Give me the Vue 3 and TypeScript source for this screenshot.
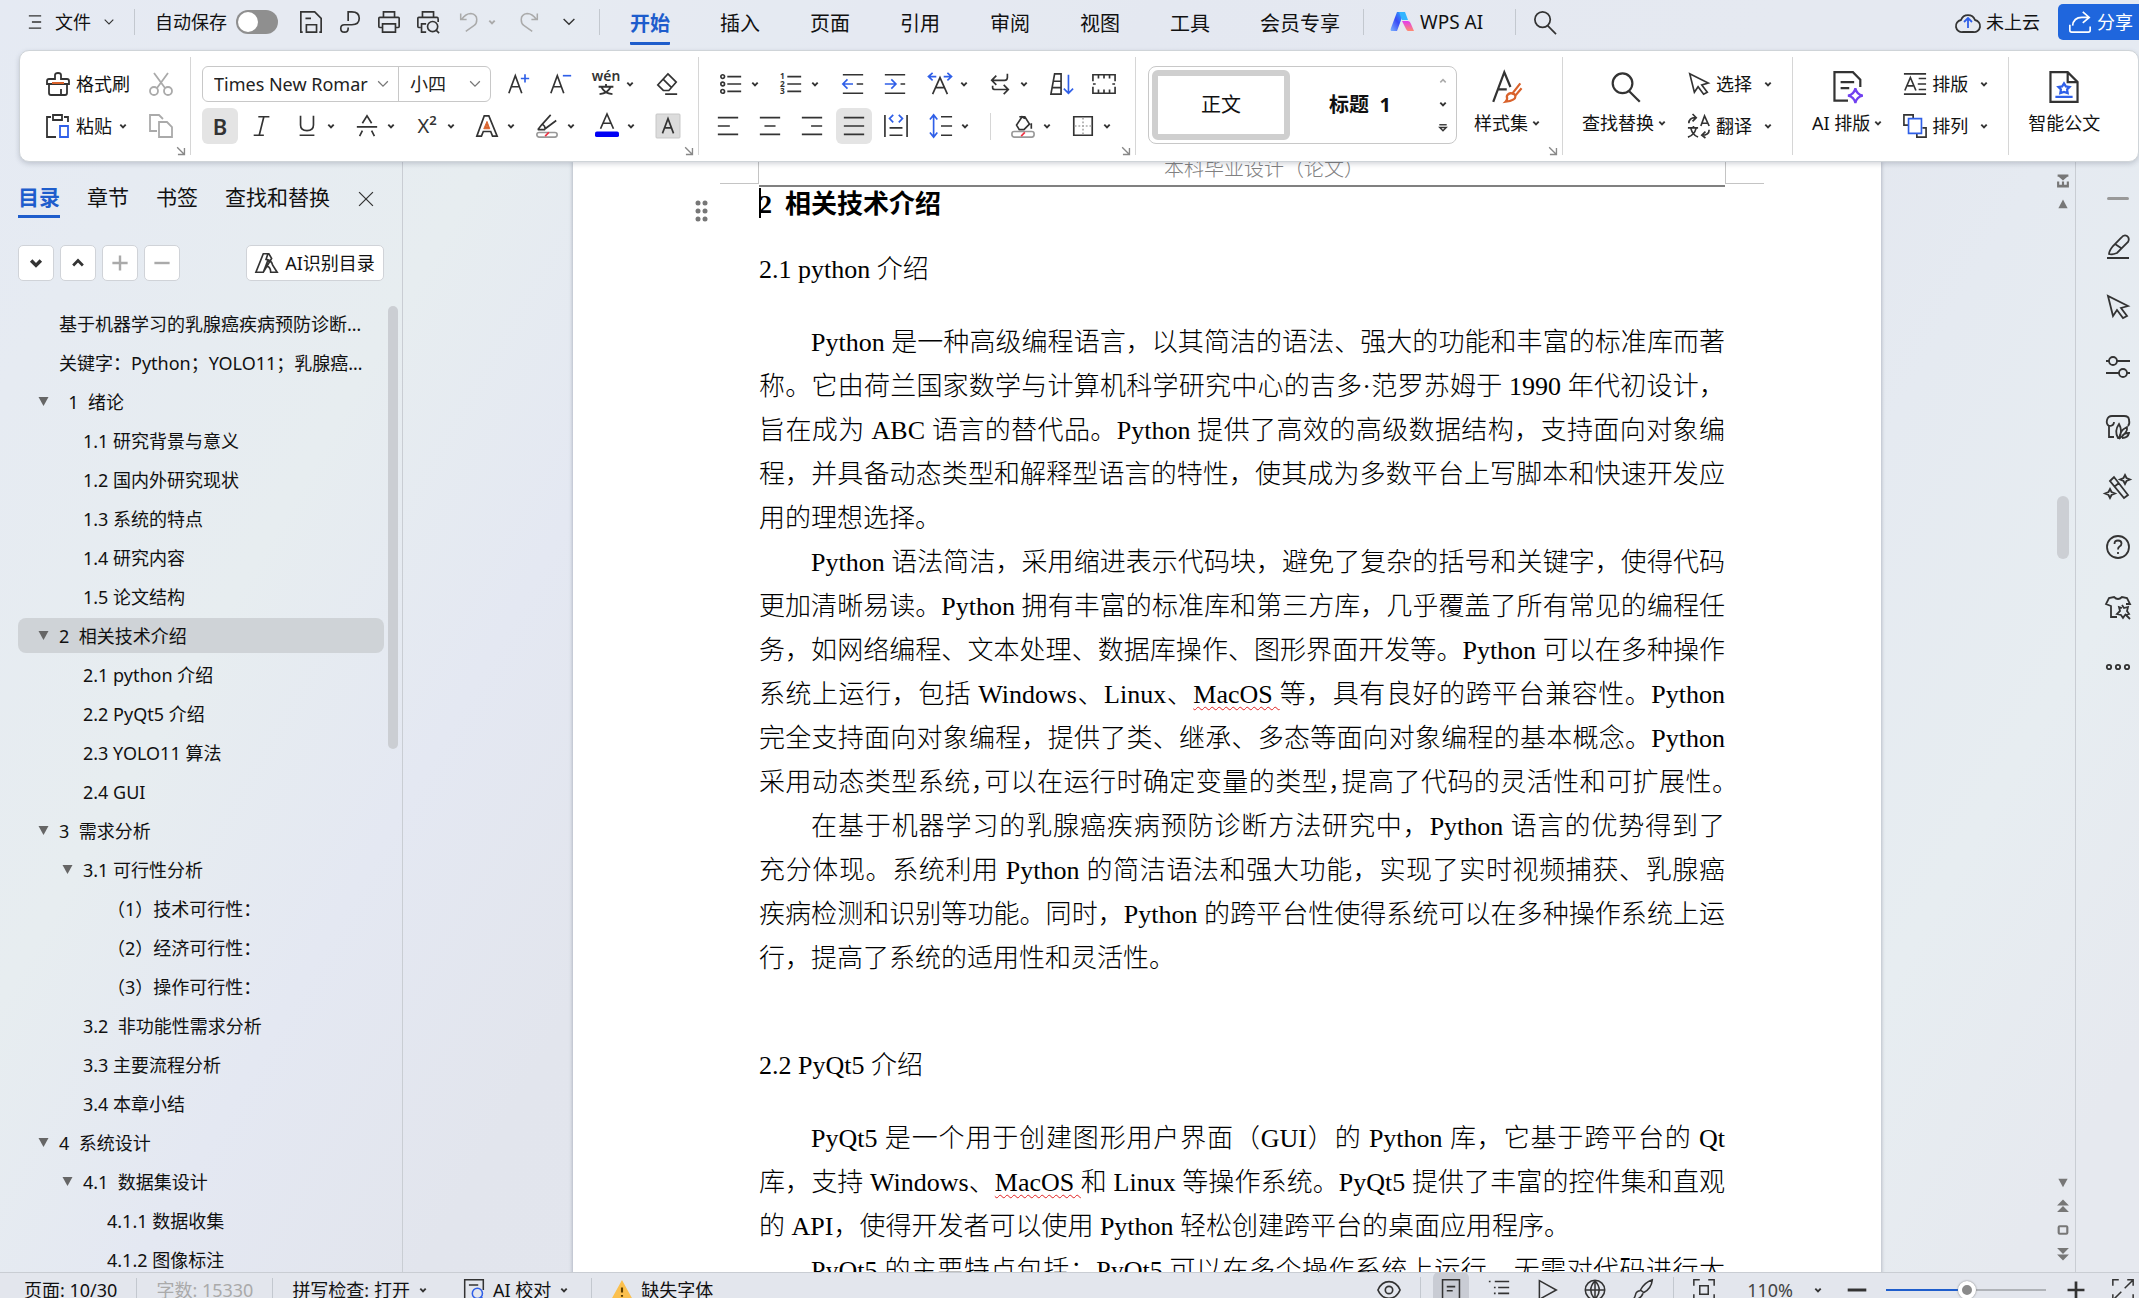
<script setup lang="ts">
import { h, ref } from 'vue'

/* Icon artwork, drawn on a 24 x 24 grid. */
const icons: Record<string, string> = {
  menu: '<path d="M4 4h16M8 12h12M4 20h16"/>',
  chev: '<path d="M5 8l7 7 7-7"/>',
  chevB: '<path d="M5 8.500l7 7 7-7" stroke-width="5"/>',
  chevUp: '<path d="M5 15.500l7-7 7 7" stroke-width="4"/>',
  save: '<path d="M3 23H1V1h15l7 7v15h-2M7 23v-8h11v8zM6 8h6"/>',
  pdf: '<path d="M10 11V1h4q8 0 8 7t-8 7H6q-4 0-4 4t4 4q4 0 4-4v-1"/>',
  print: '<path d="M6 7V1h12v6M5 18H2q-1 0-1-1V8q0-1 1-1h20q1 0 1 1v9q0 1-1 1h-3M5 14h14v9H5z"/>',
  preview: '<path d="M6 7V1h12v6M4 18H2q-1 0-1-1V8q0-1 1-1h20q1 0 1 2v3M10 14H5v9h5"/><circle cx="17" cy="17" r="5.500"/><path d="M21 21l3 3"/>',
  undo: '<path d="M1 2v7h7M2 9q5-7 11-7 7 1 7 7 0 5-3 7L7 23"/>',
  redo: '<path d="M23 2v7h-7M22 9q-5-7-11-7-7 1-7 7 0 5 3 7l10 7"/>',
  search: '<circle cx="10" cy="9" r="8"/><path d="M15 15l9 9"/>',
  cloud: '<path d="M7 22a6 6 0 0 1-2-12A7.500 7.500 0 0 1 19 10 6 6 0 0 1 17 22z"/><path stroke="#2f5fe8" d="M12 18V8M8 12l4-4 4 4"/>',
  share: '<path d="M15 1l7 6-7 6M22 7h-8Q5 7 4 16M1 15v6q0 2 2 2h18q2 0 2-2v-4"/>',
  brush: '<path d="M9 7V3q0-2 3-2t3 2v4h6q2 0 2 2v3H1V9q0-2 2-2zM3 12v9q0 2 2 2h14q2 0 2-2v-9M15 17v5"/><path stroke="#d9622b" d="M6 11h12" stroke-width="2"/>',
  cut: '<path d="M5 1l11 15M19 1L8 16"/><circle cx="5" cy="19" r="4"/><circle cx="19" cy="19" r="4"/>',
  paste: '<path d="M5 3H1v20h9M18 3h4v5M7 1h9v5H7z"/><path stroke="#2f5fe8" d="M14 12h8v11h-8z"/>',
  copy: '<path d="M8 17H1V1h9l4 4M10 8h8l5 5v10H10z"/>',
  aPlus: '<path d="M1 22L8 3l7 19M4 15h8"/><path stroke="#2f5fe8" d="M14 6h9M18.500 1.500v9"/>',
  aMinus: '<path d="M1 22L8 3l7 19M4 15h8"/><path stroke="#2f5fe8" d="M14 3h9"/>',
  wen: '<text x="12" y="9" font-size="15" font-weight="600" text-anchor="middle">wén</text><path d="M12 12v3M4 15h16M7 15q3 7 12 8M17 15q-3 7-12 8" stroke-width="2"/>',
  eraser: '<path d="M13 1l9 9-8 9H8l-6-6zM8 7l9 9M10 23h13"/>',
  italic: '<path d="M8 2h12M3 22h11M14 2L9 22"/>',
  underline: '<path d="M5 1v10q0 6 7 6t7-6V1M4 22h16"/>',
  strike: '<path d="M1 13h22M7 9l5-8 5 8M7 17l-3 6M17 17l3 6"/>',
  aOut: '<path d="M1 23L9 1h5l9 22h-5l-2-5H8l-2 5z"/><path stroke="#d9622b" fill="#d9622b" stroke-width="1" fill-rule="evenodd" d="M12 7l3 8H8.500zM12 11l-1 2h2z"/>',
  marker: '<path d="M2 16l4-5L16 0M7 10q3 2 3 5l12-9M2 16h8"/><rect x="1" y="19" width="22" height="5" rx="2.500" stroke="#999"/><path stroke="#e34" d="M10 23l4-4"/>',
  fontColor: '<path d="M5 15l7-16 7 16M8 9h8"/><rect x="-1" y="18" width="26" height="6" rx="2" fill="#0000f5" stroke="none"/>',
  aBox: '<rect x="-1" y="-1" width="26" height="26" rx="1" fill="#dcdcdc" stroke="#c4c4c4" stroke-width="1"/><path d="M6 20l6-16 6 16M8 14h8"/>',
  bullets: '<circle cx="3" cy="4" r="2"/><circle cx="3" cy="12" r="2"/><circle cx="3" cy="20" r="2"/><path d="M8 4h15M8 12h15M8 20h15"/>',
  numbers: '<g font-size="9" font-weight="700"><text x="0" y="7">1</text><text x="0" y="15">2</text><text x="0" y="23">3</text></g><path d="M8 4h15M8 12h15M8 20h15"/>',
  outdent: '<path d="M1 2h22M16 12h7M1 22h22"/><path stroke="#2f5fe8" d="M12 12H1M6 7l-5 5 5 5"/>',
  indent: '<path d="M1 2h22M18 12h5M1 22h22"/><path stroke="#2f5fe8" d="M1 12h12M8 7l5 5-5 5"/>',
  aWide: '<path d="M4 23l8-18 8 18M7 16h10"/><path stroke="#2f5fe8" d="M8 4H-.500M4 0L-.500 4 4 8M16 4h8.500M20 0l4.500 4L20 8"/>',
  wrap: '<path d="M20 1v4q0 3-3 3H3M8 3L3 8l5 5M4 14v2q0 2 3 2h14M16 13l5 5-5 5"/>',
  sort: '<path d="M0 23L4 1h7v22zM3 9h8M2 16h9"/><path stroke="#2f5fe8" d="M19 2v20M14 17l5 5 5-5"/>',
  ruler: '<path d="M0 9V2h24v7M6 2v4M12 2v4M18 2v4M0 15v7h24v-7M6 22v-4M12 22v-4M18 22v-4M0 12h3M21 12h3"/>',
  left: '<path d="M1 3h22M1 12h13M1 21h22"/>',
  center: '<path d="M1 3h22M6 12h12M1 21h22"/>',
  right: '<path d="M1 3h22M11 12h12M1 21h22"/>',
  justify: '<path d="M1 3h22M1 12h22M1 21h22"/>',
  spread: '<path d="M0 0v24M24 0v24M5 14h14M5 22h14"/><path stroke="#2f5fe8" d="M9 0L5 4l4 4M15 0l4 4-4 4"/>',
  lineGap: '<path d="M12 2h12M12 12h12M12 22h12"/><path stroke="#2f5fe8" d="M4 0v24M0 5l4-5 4 5M0 19l4 5 4-5"/>',
  paint: '<path d="M8 2h6l5 8-6 6H8l-3-5 6-9 3 2M21 9v6"/><rect x="0" y="18" width="24" height="6" rx="2.500" stroke="#999"/><path stroke="#e34" d="M10 23l4-4"/>',
  border: '<path d="M2 2h20v20H2z"/><path stroke="#aaa" stroke-dasharray="2 2" d="M12 3v18M3 12h18"/>',
  launch: '<path d="M2 2l17 17M21 4v17H4" stroke-width="3.500"/>',
  styles: '<path d="M0 24L9 0l5 12M4 14h7"/><path stroke="#d9622b" d="M22 9l-7 9M23 13l-5 6M14 17q4 0 4 3t-8 4q2-2 1-4 0-2 3-3z"/>',
  cursor: '<path d="M2 1l5 20 4-6 6 8 4-2-6-8 7-2z"/>',
  translate: '<path d="M1 9q0-6 7-6M5 -1l4 4-4 4M23 16q0 6-8 6M19 18l-4 4 4 3"/><path d="M14 12l4-11 5 11M15 9h6M0 14h11M6 12v2M3 14q2 8 8 10M9 14q-2 8-9 10" stroke-width="1.800"/>',
  aiDoc: '<path d="M12 23H1V0h15l6 6v6M6 8h11M6 13h7"/><path stroke="#7040f0" fill="#fff" d="M18 13q1 5 6 6-5 1-6 6-1-5-6-6 5-1 6-6z"/>',
  layout: '<path d="M0 1h24M0 23h24M1 19L7 5l6 14M4 14h6M16 6h8M15 12h9M16 18h8"/>',
  arrange: '<path d="M5 11H0V0h10v4M14 20v4h10V14h-4"/><path stroke="#2f5fe8" d="M5 4h14v16H5z"/>',
  official: '<path d="M1 0h14l8 8v16H1zM15 0v8h8"/><path stroke="#2f5fe8" d="M12 9l1.500 2.500 3 .500-2 2 .5 3-3-1-3 1 .5-3-2-2 3-.5zM5 20h14"/>',
  close: '<path d="M2 2l20 20M22 2L2 22"/>',
  plus: '<path d="M12 1v22M1 12h22" stroke-width="3.500"/>',
  minus: '<path d="M1 12h22" stroke-width="3.500"/>',
  tocAi: '<path d="M8 2h6l3 5-9 15H0zM13 9L8 22M13 2l-2 6q6 1 7 6l5 8h-7q0-5-4-7"/>',
  pen: '<path d="M15 3q3-4 6-2t1 6L11 18q-5 2-8 1 0-3 4-8zM9 9l6 4M1 23h22"/>',
  sliders: '<circle cx="7" cy="6" r="4"/><circle cx="17" cy="18" r="4"/><path d="M0 6h3M11 6h13M0 18h13M21 18h3"/>',
  leaf: '<path d="M8 22H3V11Q0 9 1 5q1-4 5-4h12q5 0 5 4 1 4-1 6M8 7q0 4-5 4M12 23q-4-7 1-14 4 7 0 14zM14 23q-1-7 7-11 1 5-7 11zM16 22q1-4 7-4-1 5-7 5"/>',
  wand: '<path d="M4 6l4-4 14 18-4 3zM8 12l5-4M19 0l1.500 3L24 4.500 20.500 6 19 9l-1.500-3L14 4.500 17.500 3zM4 14l1.500 3L9 18.500 5.500 20 4 23l-1.500-3L-1 18.500 2.500 17z"/>',
  help: '<circle cx="12" cy="12" r="11"/><path d="M8.500 9q0-3.500 3.500-3.500t3.500 3q0 2-2 3-1.500 1-1.500 3M12 17v2"/>',
  shirt: '<path d="M11 22H5V11L0 9l3-6 5-1q4 4 8 0l5 1 3 6h-4M16 10l2 3 4-1-1 4 2 3-4 1-2 3-2-3-4-1 3-3-1-4 3 1M19 19l5 5"/>',
  dots: '<circle cx="3" cy="12" r="2.200"/><circle cx="12" cy="12" r="2.200"/><circle cx="21" cy="12" r="2.200"/>',
  eye: '<path d="M0 12q4-9 12-9t12 9q-4 9-12 9T0 12z"/><circle cx="12" cy="12" r="4"/>',
  docView: '<path d="M2 0h20v24H2zM7 8h10M7 13h7"/>',
  outline: '<path d="M0 2h2M7 2h17M6 9h2M11 9h13M6 16h2M11 16h13M0 23h2M7 23h17"/>',
  play: '<path d="M3 1l20 11L3 23z"/>',
  globe: '<circle cx="12" cy="12" r="11.500"/><path d="M1 12h22M12 1v22M12 1q-10 11 0 22M12 1q10 11 0 22"/>',
  quill: '<path d="M23 0q-9 3-14 12l4 3Q22 10 23 0zM9 13q-5 0-6 5-1 4-3 5 9 1 12-7"/>',
  fit: '<path d="M0 7V0h7M17 0h7v7M24 17v7h-7M7 24H0v-7M7 7h10v10H7z"/>',
  full: '<path d="M0 7V0h7M17 0h7v7M24 17v7h-7M7 24H0v-7M14 10l9-9M10 14l-9 9"/>',
  proof: '<path d="M9 24H1V0h22v12M6 6h11"/><circle cx="16" cy="16" r="6" stroke="#2f5fe8"/><path stroke="#2f5fe8" d="M20 20l4 4"/>',
  warn: '<path fill="#fbc04e" stroke="#fbc04e" d="M12 2l11 20H1z"/><path stroke="#5b3d00" stroke-width="2.500" d="M12 9v6M12 18v2"/>',
  pageTop: '<path fill="currentColor" stroke="none" d="M2 0h20v4H2zM4 4l8 7 8-7zM1 13h4v6h5v-6h4v6h5v-6h4v11H1z"/>',
  triUp: '<path fill="currentColor" stroke="none" d="M12 2l10 19H2z"/>',
  triDown: '<path fill="currentColor" stroke="none" d="M12 21L2 3h20z"/>',
  twoUp: '<path fill="currentColor" stroke="none" d="M12 0l11 11H1zM12 12l11 11H1z"/>',
  twoDown: '<path fill="currentColor" stroke="none" d="M12 12L1 1h22zM12 24L1 13h22z"/>',
  square: '<rect x="4" y="5" width="16" height="14" rx="2" stroke-width="4"/>',
  more: '<path d="M4 5h16" stroke-width="3"/><path d="M5 11l7 7 7-7z" stroke-width="3"/>'
}

const Icon = (p: { name: string; size?: number }) =>
  h('svg', {
    width: p.size ?? 24,
    height: p.size ?? 24,
    viewBox: '-1 -1 26 26',
    fill: 'none',
    stroke: 'currentColor',
    'stroke-width': (p.size ?? 24) < 14 ? 2.5 : 1.8,
    'aria-hidden': 'true',
    class: 'icon',
    innerHTML: icons[p.name]
  })
Icon.props = ['name', 'size']

const autosave = ref(false)
const zoom = ref(51)

const tabs = ['开始', '插入', '页面', '引用', '审阅', '视图', '工具', '会员专享']
const quick = ['save', 'pdf', 'print', 'preview']

interface Tool { icon: string; name: string; drop?: boolean; on?: boolean }
const fontTop: Tool[] = [
  { icon: 'aPlus', name: '增大字号' },
  { icon: 'aMinus', name: '减小字号' },
  { icon: 'wen', name: '拼音指南', drop: true },
  { icon: 'eraser', name: '清除格式' }
]
const fontBottom: Tool[] = [
  { icon: 'italic', name: '倾斜' },
  { icon: 'underline', name: '下划线', drop: true },
  { icon: 'strike', name: '删除线', drop: true },
  { icon: 'sup', name: '上标', drop: true },
  { icon: 'aOut', name: '文字效果', drop: true },
  { icon: 'marker', name: '突出显示', drop: true },
  { icon: 'fontColor', name: '字体颜色', drop: true },
  { icon: 'aBox', name: '字符底纹' }
]
const paraTop: Tool[] = [
  { icon: 'bullets', name: '项目符号', drop: true },
  { icon: 'numbers', name: '编号', drop: true },
  { icon: 'outdent', name: '减少缩进' },
  { icon: 'indent', name: '增加缩进' },
  { icon: 'aWide', name: '中文版式', drop: true },
  { icon: 'wrap', name: '换行', drop: true },
  { icon: 'sort', name: '排序' },
  { icon: 'ruler', name: '制表位' }
]
const paraBottom: Tool[] = [
  { icon: 'left', name: '左对齐' },
  { icon: 'center', name: '居中' },
  { icon: 'right', name: '右对齐' },
  { icon: 'justify', name: '两端对齐', on: true },
  { icon: 'spread', name: '分散对齐' },
  { icon: 'lineGap', name: '行距', drop: true },
  { icon: 'rule', name: '' },
  { icon: 'paint', name: '底纹', drop: true },
  { icon: 'border', name: '边框', drop: true }
]

interface Entry { t: string; lv: number; open?: boolean; on?: boolean }
const toc: Entry[] = [
  { t: '基于机器学习的乳腺癌疾病预防诊断…', lv: 0 },
  { t: '关键字：Python；YOLO11；乳腺癌…', lv: 0 },
  { t: '  1  绪论', lv: 0, open: true },
  { t: '1.1 研究背景与意义', lv: 1 },
  { t: '1.2 国内外研究现状', lv: 1 },
  { t: '1.3 系统的特点', lv: 1 },
  { t: '1.4 研究内容', lv: 1 },
  { t: '1.5 论文结构', lv: 1 },
  { t: '2  相关技术介绍', lv: 0, open: true, on: true },
  { t: '2.1 python 介绍', lv: 1 },
  { t: '2.2 PyQt5 介绍', lv: 1 },
  { t: '2.3 YOLO11 算法', lv: 1 },
  { t: '2.4 GUI', lv: 1 },
  { t: '3  需求分析', lv: 0, open: true },
  { t: '3.1 可行性分析', lv: 1, open: true },
  { t: '（1）技术可行性：', lv: 2 },
  { t: '（2）经济可行性：', lv: 2 },
  { t: '（3）操作可行性：', lv: 2 },
  { t: '3.2  非功能性需求分析', lv: 1 },
  { t: '3.3 主要流程分析', lv: 1 },
  { t: '3.4 本章小结', lv: 1 },
  { t: '4  系统设计', lv: 0, open: true },
  { t: '4.1  数据集设计', lv: 1, open: true },
  { t: '4.1.1 数据收集', lv: 2 },
  { t: '4.1.2 图像标注', lv: 2 }
]

interface Para { lines: string[]; cut?: boolean }
const first: Para[] = [
  {
    lines: [
      'Python 是一种高级编程语言，以其简洁的语法、强大的功能和丰富的标准库而著',
      '称。它由荷兰国家数学与计算机科学研究中心的吉多·范罗苏姆于 1990 年代初设计，',
      '旨在成为 ABC 语言的替代品。Python 提供了高效的高级数据结构，支持面向对象编',
      '程，并具备动态类型和解释型语言的特性，使其成为多数平台上写脚本和快速开发应',
      '用的理想选择。'
    ]
  },
  {
    lines: [
      'Python 语法简洁，采用缩进表示代码块，避免了复杂的括号和关键字，使得代码',
      '更加清晰易读。Python 拥有丰富的标准库和第三方库，几乎覆盖了所有常见的编程任',
      '务，如网络编程、文本处理、数据库操作、图形界面开发等。Python 可以在多种操作',
      '系统上运行，包括 Windows、Linux、MacOS 等，具有良好的跨平台兼容性。Python',
      '完全支持面向对象编程，提供了类、继承、多态等面向对象编程的基本概念。Python',
      '采用动态类型系统，可以在运行时确定变量的类型，提高了代码的灵活性和可扩展性。'
    ],
    cut: true
  },
  {
    lines: [
      '在基于机器学习的乳腺癌疾病预防诊断方法研究中，Python 语言的优势得到了',
      '充分体现。系统利用 Python 的简洁语法和强大功能，实现了实时视频捕获、乳腺癌',
      '疾病检测和识别等功能。同时，Python 的跨平台性使得系统可以在多种操作系统上运',
      '行，提高了系统的适用性和灵活性。'
    ]
  }
]
const second: Para[] = [
  {
    lines: [
      'PyQt5 是一个用于创建图形用户界面（GUI）的 Python 库，它基于跨平台的 Qt',
      '库，支持 Windows、MacOS 和 Linux 等操作系统。PyQt5 提供了丰富的控件集和直观',
      '的 API，使得开发者可以使用 Python 轻松创建跨平台的桌面应用程序。'
    ]
  },
  { lines: ['PyQt5 的主要特点包括：PyQt5 可以在多个操作系统上运行，无需对代码进行大'], cut: true }
]
const sections = [
  { title: '2.1 python 介绍', paras: first },
  { title: '2.2 PyQt5 介绍', paras: second }
]
/* Splits a line so that words the spell checker flags can be underlined. */
const split = (s: string) => s.split(/(MacOS )/)

const rail = [
  ['pen', '编辑'], ['cursor', '选择'], ['sliders', '属性'], ['leaf', '样式'],
  ['wand', '美化'], ['help', '帮助'], ['shirt', '皮肤'], ['dots', '更多']
]
const views = [['outline', '大纲'], ['play', '播放'], ['globe', 'Web 版式'], ['quill', '写作模式']]
</script>

<template>
  <div class="app">
    <header class="top">
      <button class="file"><Icon name="menu" :size="20" /><span>文件</span><Icon name="chev" :size="16" /></button>
      <i class="bar"></i>
      <label class="auto">自动保存<input v-model="autosave" type="checkbox" class="toggle" /></label>
      <nav class="quick">
        <button v-for="q in quick" :key="q" :aria-label="q"><Icon :name="q" :size="24" /></button>
      </nav>
      <div class="history">
        <button aria-label="撤销" class="dim"><Icon name="undo" :size="22" /><Icon name="chevB" :size="10" /></button>
        <button aria-label="恢复" class="dim"><Icon name="redo" :size="22" /></button>
        <button aria-label="更多"><Icon name="chev" :size="20" /></button>
      </div>
      <i class="bar"></i>
      <nav class="tabs">
        <a v-for="(t, i) in tabs" :key="t" href="#" :class="{ active: i === 0 }">{{ t }}</a>
      </nav>
      <i class="bar"></i>
      <button class="wps">
        <svg width="24" height="20" viewBox="0 0 24 20" aria-hidden="true">
          <defs>
            <linearGradient id="wa" x1="0" y1="1" x2="1" y2="0"><stop offset="0" stop-color="#7db4ff" /><stop offset=".5" stop-color="#3a49f5" /><stop offset="1" stop-color="#2fb8ff" /></linearGradient>
            <linearGradient id="wb" x1="0" y1="0" x2="0" y2="1"><stop offset="0" stop-color="#e23cf0" /><stop offset="1" stop-color="#ff8a70" /></linearGradient>
          </defs>
          <path d="M7 0h7L7 19H1q-1-1 0-3z" fill="url(#wa)" />
          <path d="M9 0h6l3 8h-6z" fill="#32b4ff" />
          <path d="M12 9h6q2 0 3 3l3 7h-6q-1 0-2-2z" fill="url(#wb)" />
        </svg>
        <span>WPS AI</span>
      </button>
      <i class="bar"></i>
      <button aria-label="搜索" class="find"><Icon name="search" :size="25" /></button>
      <button class="cloud"><Icon name="cloud" :size="26" /><span>未上云</span></button>
      <button class="share"><Icon name="share" :size="24" /><span>分享</span></button>
    </header>

    <section class="ribbon">
      <div class="group clip">
        <div class="row spread">
          <button class="label"><Icon name="brush" :size="26" /><span>格式刷</span></button>
          <button class="tool dim" aria-label="剪切"><Icon name="cut" :size="26" /></button>
        </div>
        <div class="row spread">
          <button class="label"><Icon name="paste" :size="26" /><span>粘贴</span><Icon name="chevB" :size="10" /></button>
          <button class="tool dim" aria-label="复制"><Icon name="copy" :size="26" /></button>
        </div>
        <button class="launch" aria-label="剪贴板"><Icon name="launch" :size="10" /></button>
      </div>

      <div class="group font">
        <div class="row">
          <div class="combo">
            <div class="pick name">
              <select aria-label="字体"><option>Times New Romar</option></select><Icon name="chev" :size="18" />
            </div>
            <div class="pick size">
              <select aria-label="字号"><option>小四</option></select><Icon name="chev" :size="18" />
            </div>
          </div>
          <button v-for="t in fontTop" :key="t.icon" class="tool" :class="{ drop: t.drop }" :aria-label="t.name">
            <Icon :name="t.icon" /><Icon v-if="t.drop" name="chevB" :size="10" />
          </button>
        </div>
        <div class="row">
          <button class="tool on bold">B</button>
          <button v-for="t in fontBottom" :key="t.icon" class="tool" :class="{ drop: t.drop }" :aria-label="t.name">
            <span v-if="t.icon === 'sup'" class="sup">X<sup>2</sup></span>
            <Icon v-else :name="t.icon" /><Icon v-if="t.drop" name="chevB" :size="10" />
          </button>
        </div>
        <button class="launch" aria-label="字体设置"><Icon name="launch" :size="10" /></button>
      </div>

      <div class="group para">
        <div class="row">
          <button v-for="t in paraTop" :key="t.icon" class="tool" :class="{ drop: t.drop }" :aria-label="t.name">
            <Icon :name="t.icon" /><Icon v-if="t.drop" name="chevB" :size="10" />
          </button>
        </div>
        <div class="row">
          <template v-for="t in paraBottom" :key="t.icon">
            <i v-if="t.icon === 'rule'" class="rule"></i>
            <button v-else class="tool" :class="{ drop: t.drop, on: t.on }" :aria-label="t.name">
              <Icon :name="t.icon" /><Icon v-if="t.drop" name="chevB" :size="10" />
            </button>
          </template>
        </div>
        <button class="launch" aria-label="段落设置"><Icon name="launch" :size="10" /></button>
      </div>

      <div class="group wide styles">
        <div class="gallery">
          <button class="card picked">正文</button>
          <button class="card heading">标题&nbsp; 1</button>
          <div class="arrows">
            <button aria-label="上一行" class="dim"><Icon name="chevUp" :size="10" /></button>
            <button aria-label="下一行"><Icon name="chevB" :size="10" /></button>
            <button aria-label="展开"><Icon name="more" :size="12" /></button>
          </div>
        </div>
        <button class="big"><Icon name="styles" :size="32" /><span>样式集<Icon name="chevB" :size="10" /></span></button>
        <button class="launch" aria-label="样式设置"><Icon name="launch" :size="10" /></button>
      </div>

      <div class="group wide">
        <button class="big"><Icon name="search" :size="34" /><span>查找替换<Icon name="chevB" :size="10" /></span></button>
        <div class="pair">
          <button class="label"><Icon name="cursor" /><span>选择</span><Icon name="chevB" :size="10" /></button>
          <button class="label"><Icon name="translate" /><span>翻译</span><Icon name="chevB" :size="10" /></button>
        </div>
      </div>

      <div class="group wide">
        <button class="big"><Icon name="aiDoc" :size="34" /><span>AI 排版<Icon name="chevB" :size="10" /></span></button>
        <div class="pair">
          <button class="label"><Icon name="layout" /><span>排版</span><Icon name="chevB" :size="10" /></button>
          <button class="label"><Icon name="arrange" /><span>排列</span><Icon name="chevB" :size="10" /></button>
        </div>
      </div>

      <div class="group wide last">
        <button class="big"><Icon name="official" :size="32" /><span>智能公文</span></button>
      </div>
    </section>

    <main class="body">
      <aside class="side">
        <nav class="sidetabs">
          <a href="#" class="active">目录</a><a href="#">章节</a><a href="#">书签</a><a href="#">查找和替换</a>
          <button aria-label="关闭"><Icon name="close" :size="18" /></button>
        </nav>
        <div class="sidetools">
          <button aria-label="展开"><Icon name="chevB" :size="18" /></button>
          <button aria-label="收起"><Icon name="chevUp" :size="18" /></button>
          <button aria-label="增加" class="dim"><Icon name="plus" :size="18" /></button>
          <button aria-label="减少" class="dim"><Icon name="minus" :size="18" /></button>
          <button class="ai"><Icon name="tocAi" /><span>AI识别目录</span></button>
        </div>
        <div class="treewrap">
          <ul class="tree">
            <li v-for="e in toc" :key="e.t" :class="['lv' + e.lv, { on: e.on }]">
              <span class="fold"><Icon v-if="e.open" name="triDown" :size="13" /></span><a href="#">{{ e.t }}</a>
            </li>
          </ul>
          <div class="sidescroll"></div>
        </div>
      </aside>

      <div class="canvas">
        <article class="page">
          <div class="head">本科毕业设计（论文）</div>
          <h1><i class="caret"></i>2&nbsp; 相关技术介绍</h1>
          <svg class="grip" width="16" height="24" viewBox="0 0 16 24" fill="#777" aria-hidden="true">
            <circle cx="4" cy="4" r="2.500" /><circle cx="11" cy="4" r="2.500" /><circle cx="4" cy="12" r="2.500" />
            <circle cx="11" cy="12" r="2.500" /><circle cx="4" cy="20" r="2.500" /><circle cx="11" cy="20" r="2.500" />
          </svg>
          <section v-for="s in sections" :key="s.title">
            <h2>{{ s.title }}</h2>
            <p v-for="(p, i) in s.paras" :key="i" :class="{ full: p.cut }">
              <span v-for="l in p.lines" :key="l" class="line" :class="{ tight: l.startsWith('采用动态') }"><template v-for="(g, k) in split(l)" :key="k"><span v-if="g === 'MacOS '" class="typo">{{ g }}</span><template v-else>{{ g }}</template></template></span>
            </p>
          </section>
        </article>
      </div>

      <div class="scroll">
        <Icon name="pageTop" :size="14" />
        <Icon name="triUp" :size="12" />
        <div class="track"><div class="thumb"></div></div>
        <Icon name="triDown" :size="12" />
        <Icon name="twoUp" :size="14" />
        <Icon name="square" :size="14" />
        <Icon name="twoDown" :size="14" />
      </div>

      <nav class="rail">
        <i class="dash"></i>
        <button v-for="r in rail" :key="r[0]" :aria-label="r[1]"><Icon :name="r[0]" :size="26" /></button>
      </nav>
    </main>

    <footer class="status">
      <div class="inner">
        <span class="cell">页面: 10/30</span>
        <span class="cell faint">字数: 15330</span>
        <button class="cell spell">拼写检查: 打开<Icon name="chevB" :size="10" /></button>
        <button class="cell ai"><Icon name="proof" :size="22" />AI 校对<Icon name="chevB" :size="10" /></button>
        <button class="cell"><Icon name="warn" :size="22" />缺失字体</button>
        <div class="tail">
          <button aria-label="护眼模式"><Icon name="eye" /></button>
          <i class="bar"></i>
          <button aria-label="页面视图" class="sel"><Icon name="docView" :size="22" /></button>
          <button v-for="v in views" :key="v[0]" :aria-label="v[1]"><Icon :name="v[0]" :size="22" /></button>
          <i class="bar"></i>
          <button aria-label="适合页面"><Icon name="fit" :size="22" /></button>
          <button class="pct">110%<Icon name="chevB" :size="10" /></button>
          <button aria-label="缩小"><Icon name="minus" :size="22" /></button>
          <input v-model="zoom" type="range" min="0" max="100" aria-label="缩放" class="zoom" />
          <button aria-label="放大"><Icon name="plus" :size="20" /></button>
          <button aria-label="全屏"><Icon name="full" :size="22" /></button>
        </div>
      </div>
    </footer>
  </div>
</template>

<style>
html,
body {
  margin: 0;
  overflow: hidden;
}
</style>

<style scoped>
.app {
  height: 100vh;
  display: flex;
  flex-direction: column;
  overflow: hidden;
  background: linear-gradient(120deg, #e5eaf3 0%, #e6ebf2 8%, #e7edf0 20%, #e4e8f2 30%, #e2e5ed 40%, #e3e6ee 62%, #e5eaf1 74%, #e7edf1 85%, #e6e9ef 95%);
  font: 18px/24px "Noto Sans", "Noto Sans CJK SC", sans-serif;
  color: #111;
}
button {
  border: 0;
  padding: 0;
  background: none;
  font: inherit;
  color: inherit;
  display: flex;
  align-items: center;
  white-space: nowrap;
}
a {
  color: inherit;
  text-decoration: none;
  white-space: nowrap;
}
.icon {
  display: block;
  flex: none;
  overflow: visible;
  color: #333;
}
.dim .icon {
  color: #aaa;
}
.icon :deep(text) {
  fill: #333;
  stroke: none;
}
.bar {
  width: 1px;
  height: 26px;
  background: #c3c8cf;
  flex: none;
}

/* title bar */
.top {
  height: 50px;
  padding-bottom: 6px;
  box-sizing: border-box;
  display: flex;
  align-items: center;
  flex: none;
  background: rgba(229, 234, 242, 0.7);
}
.file {
  margin: 0 17px 0 25px;
}
.file span {
  margin: 0 10px;
}
.auto {
  margin-left: 20px;
  display: flex;
  align-items: center;
  gap: 9px;
}
.toggle {
  appearance: none;
  margin: 0;
  width: 42px;
  height: 24px;
  border-radius: 12px;
  background: #8f8f8f;
  display: flex;
  align-items: center;
}
.toggle::before {
  content: "";
  width: 20px;
  height: 20px;
  margin-left: 2px;
  border-radius: 50%;
  background: #fff;
}
.quick {
  display: flex;
  gap: 15px;
  margin-left: 21px;
}
.history {
  display: flex;
  align-items: center;
  margin: 0 20px 0 19px;
}
.history button:nth-child(1) {
  gap: 6px;
}
.history button:nth-child(2) {
  margin: 0 20px;
}
.tabs {
  display: flex;
  gap: 50px;
  margin: 0 23px 0 30px;
  font-size: 20px;
}
.tabs a {
  line-height: 36px;
  border-bottom: 3px solid transparent;
  border-radius: 1px;
  position: relative;
  top: 3px;
}
.tabs .active,
.sidetabs .active {
  color: #1e5dcc;
  font-weight: 700;
  border-color: #1e5dcc;
}
.wps {
  margin: 0 32px 0 26px;
  gap: 6px;
  font-size: 19px;
}
.find {
  margin-left: 16px;
}
.cloud {
  margin-left: auto;
  gap: 5px;
}
.share {
  align-self: flex-start;
  margin: 4px 0 0 18px;
  height: 36px;
  padding: 0 6px 0 10px;
  gap: 5px;
  border-radius: 5px 0 0 5px;
  background: #1f66dd;
  color: #fff;
}
.share .icon {
  color: #fff;
}

/* ribbon */
.ribbon {
  height: 112px;
  box-sizing: border-box;
  margin-left: 19px;
  border: 1px solid #cfd4d8;
  border-radius: 10px;
  background: #fff;
  box-shadow: 0 2px 5px rgba(60, 70, 90, 0.22);
  display: flex;
  flex: none;
  position: relative;
  z-index: 2;
}
.group {
  position: relative;
  box-sizing: border-box;
  display: flex;
  flex-direction: column;
  gap: 6px;
  padding: 15px 12px 0 11px;
}
.group::after {
  content: "";
  position: absolute;
  right: 0;
  top: 6px;
  bottom: 6px;
  width: 1px;
  background: #d6d6d6;
}
.group.last::after {
  display: none;
}
.clip {
  padding: 15px 12px 0 25px;
  width: 171px;
}
.font {
  padding-right: 13px;
}
.para {
  padding-right: 14px;
}
.row {
  height: 36px;
  display: flex;
  align-items: center;
  gap: 6px;
}
.spread {
  justify-content: space-between;
}
.label {
  height: 36px;
  gap: 5px;
}
.label > .icon:last-child:not(:first-child) {
  margin-left: 6px;
}
.clip .label > .icon:last-child {
  margin-left: 1px;
}
.tool {
  width: 36px;
  height: 36px;
  border-radius: 6px;
  justify-content: center;
  flex: none;
}
.tool.drop {
  width: 54px;
  justify-content: flex-start;
  gap: 7px;
  padding-left: 9px;
}
.drop + .tool:not(.drop) {
  margin-left: 4px;
}
.para .drop + .tool:not(.drop) {
  margin-left: 5px;
}
.on {
  background: #e4e4e4;
}
.bold {
  font-size: 22px;
  font-weight: 600;
  color: #333;
}
.sup {
  width: 24px;
  font-size: 20px;
  color: #333;
}
.sup sup {
  font-size: 13px;
  line-height: 0;
  font-weight: 600;
}
.rule {
  width: 1px;
  height: 27px;
  background: #d6d6d6;
  margin: 0 5px 0 10px;
}
.combo {
  display: flex;
  box-sizing: border-box;
  width: 289px;
  height: 36px;
  border: 1px solid #c8c8c8;
  border-radius: 6px;
  margin-right: 4px;
}
.pick {
  position: relative;
  display: flex;
  align-items: center;
}
.pick .icon {
  position: absolute;
  right: 6px;
  pointer-events: none;
  color: #777;
}
.pick.name {
  width: 195px;
  border-right: 1px solid #c8c8c8;
}
.pick.size {
  flex: 1;
}
.pick select {
  appearance: none;
  width: 100%;
  height: 34px;
  border: 0;
  background: none;
  padding: 0 0 0 11px;
  font: inherit;
  color: #222;
}
.launch {
  position: absolute;
  right: 5px;
  bottom: 5px;
}
.launch .icon {
  color: #888;
}
.wide {
  flex-direction: row;
  padding: 15px 20px 0 19px;
  gap: 20px;
}
.styles {
  padding: 15px 22px 0 12px;
  gap: 17px;
}
.gallery {
  width: 309px;
  height: 78px;
  box-sizing: border-box;
  border: 1px solid #c8c8c8;
  border-radius: 8px;
  padding: 3px;
  display: flex;
}
.card {
  width: 140px;
  box-sizing: border-box;
  height: 70px;
  justify-content: center;
  font-size: 20px;
}
.picked {
  width: 138px;
  border: 6px solid #cfcfcf;
  border-radius: 6px;
}
.heading {
  font-weight: 700;
}
.arrows {
  margin-left: auto;
  width: 20px;
  display: flex;
  flex-direction: column;
  justify-content: space-between;
  align-items: center;
  padding: 6px 0;
}
.big {
  flex-direction: column;
  gap: 7px;
  padding-top: 5px;
}
.big > .icon {
  height: 32px;
}
.big > span {
  display: flex;
  align-items: center;
  gap: 3px;
  line-height: 26px;
}
.pair {
  display: flex;
  flex-direction: column;
  gap: 6px;
}

/* work area */
.body {
  flex: 1;
  min-height: 0;
  display: flex;
}
.side {
  width: 402px;
  flex: none;
  border-right: 1px solid #c9cdd3;
  display: flex;
  flex-direction: column;
  min-height: 0;
}
.sidetabs {
  display: flex;
  align-items: center;
  gap: 27px;
  padding: 17px 27px 0 18px;
  font-size: 21px;
}
.sidetabs a {
  line-height: 36px;
  border-bottom: 3px solid transparent;
}
.sidetabs button {
  margin-left: auto;
}
.sidetools {
  display: flex;
  gap: 6px;
  padding: 27px 18px 0;
}
.sidetools button {
  box-sizing: border-box;
  width: 36px;
  height: 36px;
  justify-content: center;
  background: #fff;
  border: 1px solid #d0d3d8;
  border-radius: 5px;
}
.sidetools .ai {
  width: 138px;
  margin-left: auto;
  gap: 6px;
}
.treewrap {
  flex: 1;
  min-height: 0;
  margin-top: 25px;
  display: flex;
  overflow: hidden;
}
.tree {
  list-style: none;
  margin: 0;
  padding: 0 4px 0 18px;
  width: 366px;
  flex: none;
}
.tree li {
  height: 35px;
  margin-bottom: 4px;
  display: flex;
  align-items: center;
  border-radius: 8px;
  white-space: pre;
}
.tree li.on {
  background: #cfd3d7;
}
.tree a {
  white-space: pre;
}
.fold {
  width: 22px;
  flex: none;
}
.fold .icon {
  color: #666;
}
.lv0 {
  padding-left: 19px;
}
.lv1 {
  padding-left: 43px;
}
.lv2 {
  padding-left: 67px;
}
.sidescroll {
  width: 10px;
  height: 443px;
  border-radius: 5px;
  background: #cbced3;
}
.canvas {
  flex: 1;
  min-width: 0;
  overflow: hidden;
  display: flex;
  justify-content: center;
}
.page {
  position: relative;
  box-sizing: border-box;
  width: 1308px;
  flex: none;
  height: 1300px;
  padding: 0 156px 0 186px;
  background: #fff;
  box-shadow: 0 0 4px rgba(50, 60, 80, 0.4);
  font: 300 26px/44px "Liberation Serif", "Noto Sans CJK SC", serif;
  color: #000;
}
.head {
  position: relative;
  height: 25px;
  box-sizing: border-box;
  border-bottom: 2px solid #808080;
  padding-left: 44px;
  text-align: center;
  font-size: 20px;
  line-height: 14px;
  color: #808080;
}
.head::before,
.head::after {
  content: "";
  position: absolute;
  top: 0;
  width: 38px;
  height: 21px;
  border: 0 solid #c4c4c4;
  border-bottom-width: 1px;
}
.head::before {
  right: 100%;
  border-right-width: 1px;
}
.head::after {
  left: 100%;
  border-left-width: 1px;
}
.grip {
  position: absolute;
  left: 121px;
  top: 37px;
}
.caret {
  position: absolute;
  left: 0;
  top: 1px;
  width: 2px;
  height: 30px;
  background: #000;
}
h1,
h2,
p {
  margin: 0;
  font-size: 26px;
}
h1 {
  position: relative;
  font-weight: 700;
  line-height: 36px;
}
h2 {
  font-weight: 300;
  margin: 25px 0 29px;
}
section + section h2 {
  margin-top: 63px;
}
.line {
  display: block;
  white-space: nowrap;
  text-align: justify;
  text-align-last: justify;
}
.line:first-child {
  padding-left: 52px;
}
p:not(.full) .line:last-child {
  text-align-last: left;
}
.tight {
  font-feature-settings: "halt";
}
.typo {
  text-decoration: underline wavy #e02020 1px;
  text-underline-offset: 3px;
  text-decoration-skip-ink: none;
}

/* scroll column and right rail */
.scroll {
  width: 24px;
  flex: none;
  border-right: 1px solid #c9cdd3;
  display: flex;
  flex-direction: column;
  align-items: center;
  gap: 10px;
  padding: 12px 0 11px;
}
.scroll .icon {
  color: #777;
}
.track {
  flex: 1;
  padding-top: 276px;
}
.thumb {
  width: 12px;
  height: 63px;
  border-radius: 6px;
  background: #cccfd4;
}
.rail {
  width: 63px;
  box-sizing: border-box;
  padding-left: 20px;
  flex: none;
  display: flex;
  flex-direction: column;
  align-items: center;
  gap: 34px;
}
.dash {
  width: 22px;
  height: 3px;
  border-radius: 2px;
  background: #999;
  margin-top: 35px;
}

/* status bar */
.status {
  height: 26px;
  flex: none;
  box-sizing: border-box;
  border-top: 1px solid #c9cdd3;
  background: #e3e6ed;
  overflow: hidden;
}
.inner {
  height: 34px;
  display: flex;
  align-items: center;
  padding: 0 5px 0 24px;
}
.cell {
  display: flex;
  align-items: center;
  gap: 8px;
  padding-right: 19px;
  white-space: nowrap;
}
.cell + .cell {
  padding-left: 19px;
}
.cell:nth-child(-n + 2),
.cell.ai {
  border-right: 1px solid #c3c8cf;
}
.cell.spell {
  padding-right: 16px;
}
.cell.ai {
  padding-right: 22px;
}
.faint {
  color: #aaa;
}
.tail {
  margin-left: auto;
  display: flex;
  align-items: center;
  gap: 26px;
}
.tail .bar {
  margin: 0 -7px;
}
.sel {
  width: 36px;
  height: 36px;
  margin: 0 -7px;
  justify-content: center;
  border-radius: 6px;
  background: #c9ccd4;
}
.pct {
  gap: 20px;
  color: #444;
  margin: 0 -3px 0 6px;
}
.zoom {
  appearance: none;
  width: 160px;
  height: 20px;
  margin: 0 -6px 0 -8px;
  background: linear-gradient(#1e5dcc, #1e5dcc) 0 50% / 51% 2px no-repeat, linear-gradient(#b0b3b8, #b0b3b8) 0 50% / 100% 2px no-repeat;
}
.zoom::-webkit-slider-thumb {
  appearance: none;
  width: 18px;
  height: 18px;
  border-radius: 50%;
  background: #8a8a8a;
  border: 4px solid #fff;
  box-shadow: 0 0 2px #777;
}
</style>
